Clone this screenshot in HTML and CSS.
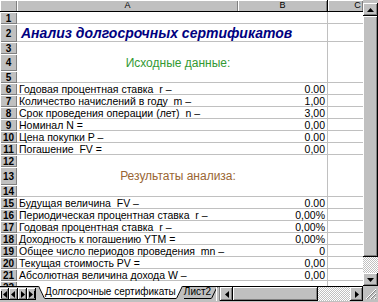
FILE: index.html
```html
<!DOCTYPE html>
<html lang="ru">
<head>
    <meta charset="UTF-8">
    <title>Анализ долгосрочных сертификатов</title>
    <link rel="stylesheet" href="styles.css">
</head>
<body>
<div class="excel">

    <div class="sheet">
        <div class="colheads">
            <div class="corner"></div>
            <div class="colhead col-a">A</div>
            <div class="colhead col-b">B</div>
            <div class="colhead col-c">C</div>
        </div>

        <div class="row line"><div class="rh">1</div><div class="cell"></div><div class="cell-c"></div></div>
        <div class="row line tall"><div class="rh">2</div><div class="cell"><span class="title">Анализ долгосрочных сертификатов</span></div><div class="cell-c"></div></div>
        <div class="row"><div class="rh">3</div><div class="cell"></div><div class="cell-c"></div></div>
        <div class="row mid"><div class="rh">4</div><div class="cell"><span class="section green">Исходные данные:</span></div><div class="cell-c"></div></div>
        <div class="row line"><div class="rh">5</div><div class="cell"></div><div class="cell-c"></div></div>

        <div class="row line"><div class="rh">6</div><div class="cell"><span>Годовая процентная ставка&nbsp; r –</span><span>0.00</span></div><div class="cell-c"></div></div>
        <div class="row line"><div class="rh">7</div><div class="cell"><span>Количество начислений в году&nbsp; m –</span><span>1,00</span></div><div class="cell-c"></div></div>
        <div class="row line"><div class="rh">8</div><div class="cell"><span>Срок проведения операции (лет)&nbsp; n –</span><span>3,00</span></div><div class="cell-c"></div></div>
        <div class="row line"><div class="rh">9</div><div class="cell"><span>Номинал N =</span><span>0,00</span></div><div class="cell-c"></div></div>
        <div class="row line"><div class="rh">10</div><div class="cell"><span>Цена покупки P –</span><span>0.00</span></div><div class="cell-c"></div></div>
        <div class="row line"><div class="rh">11</div><div class="cell"><span>Погашение&nbsp; FV =</span><span>0,00</span></div><div class="cell-c"></div></div>

        <div class="row"><div class="rh">12</div><div class="cell"></div><div class="cell-c"></div></div>
        <div class="row tall"><div class="rh">13</div><div class="cell"><span class="section brown">Результаты анализа:</span></div><div class="cell-c"></div></div>
        <div class="row line"><div class="rh">14</div><div class="cell"></div><div class="cell-c"></div></div>

        <div class="row line"><div class="rh">15</div><div class="cell"><span>Будущая величина&nbsp; FV –</span><span>0.00</span></div><div class="cell-c"></div></div>
        <div class="row line"><div class="rh">16</div><div class="cell"><span>Периодическая процентная ставка&nbsp; r –</span><span>0,00%</span></div><div class="cell-c"></div></div>
        <div class="row line"><div class="rh">17</div><div class="cell"><span>Годовая процентная ставка&nbsp; r –</span><span>0,00%</span></div><div class="cell-c"></div></div>
        <div class="row line"><div class="rh">18</div><div class="cell"><span>Доходность к погашению YTM =</span><span>0,00%</span></div><div class="cell-c"></div></div>
        <div class="row line"><div class="rh">19</div><div class="cell"><span>Общее число периодов проведения&nbsp; mn –</span><span>0</span></div><div class="cell-c"></div></div>
        <div class="row line"><div class="rh">20</div><div class="cell"><span>Текущая стоимость PV =</span><span>0,00</span></div><div class="cell-c"></div></div>
        <div class="row line"><div class="rh">21</div><div class="cell"><span>Абсолютная величина дохода W –</span><span>0,00</span></div><div class="cell-c"></div></div>
        <div class="row line"><div class="rh">22</div><div class="cell"></div><div class="cell-c"></div></div>
    </div>

    <div class="vscroll">
        <div class="btn up">
            <svg width="7" height="4"><polygon points="3.5,0 7,4 0,4" fill="#000"/></svg>
        </div>
        <div class="thumb vthumb"></div>
        <div class="track"></div>
        <div class="btn down">
            <svg width="7" height="4"><polygon points="0,0 7,0 3.5,4" fill="#000"/></svg>
        </div>
    </div>

    <div class="tabbar">
        <div class="nav">
            <div class="navbtn"><svg width="7" height="7"><rect x="0" y="0" width="1" height="7"/><polygon points="6,0 6,7 2,3.5"/></svg></div>
            <div class="navbtn"><svg width="5" height="7"><polygon points="4,0 4,7 0,3.5"/></svg></div>
            <div class="navbtn"><svg width="5" height="7"><polygon points="1,0 1,7 5,3.5"/></svg></div>
            <div class="navbtn"><svg width="7" height="7"><polygon points="1,0 1,7 5,3.5"/><rect x="6" y="0" width="1" height="7"/></svg></div>
        </div>

        <div class="tabs">
            <div class="tab active">
                <svg class="slant" width="7" height="13"><polygon points="0,0 6,12 7,12 7,0" fill="#fff"/><line x1="0.5" y1="0" x2="6.5" y2="12.5" stroke="#000"/></svg>
                <span class="tabtext">Долгосрочные сертификаты</span>
                <svg class="slant" width="7" height="13"><polygon points="0,0 0,12 1,12 7,0" fill="#fff"/><line x1="0.5" y1="12.5" x2="6.5" y2="0" stroke="#000"/></svg>
            </div>
            <div class="tab">
                <span class="tabtext">Лист2</span>
                <svg class="slant" width="7" height="13"><line x1="0.5" y1="12.5" x2="6.5" y2="0" stroke="#000"/></svg>
            </div>
        </div>

        <div class="split"></div>

        <div class="hscroll">
            <div class="btn hbtn"><svg width="4" height="7"><polygon points="4,0 4,7 0,3.5" fill="#000"/></svg></div>
            <div class="thumb hthumb"></div>
            <div class="track"></div>
            <div class="btn hbtn"><svg width="4" height="7"><polygon points="0,0 0,7 4,3.5" fill="#000"/></svg></div>
        </div>
    </div>

    <div class="grip">
        <svg width="12" height="12">
            <line x1="11" y1="1" x2="1" y2="11" stroke="#fff"/>
            <line x1="11" y1="2" x2="2" y2="11" stroke="#808080"/>
            <line x1="11" y1="5" x2="5" y2="11" stroke="#fff"/>
            <line x1="11" y1="6" x2="6" y2="11" stroke="#808080"/>
            <line x1="11" y1="9" x2="9" y2="11" stroke="#fff"/>
            <line x1="11" y1="10" x2="10" y2="11" stroke="#808080"/>
        </svg>
    </div>

</div>
</body>
</html>
```

FILE: styles.css
```css
* {
    box-sizing: border-box;
}

body {
    margin: 0;
    width: 378px;
    height: 302px;
    overflow: hidden;
    background: #c0c0c0;
    font-family: "Liberation Sans", Arial, sans-serif;
}

.excel {
    display: grid;
    grid-template-columns: 363px 15px;
    grid-template-rows: 286px 16px;
    width: 378px;
    height: 302px;
}

/* sheet */
.sheet {
    background: #fff;
    overflow: hidden;
}

.colheads {
    display: flex;
    height: 12px;
    background: #c0c0c0;
    border-bottom: 1px solid #000;
}

.corner {
    width: 17px;
    flex: none;
    box-shadow: inset 1px 1px #fff, inset -1px 0 #808080;
}

.colhead {
    font-size: 9px;
    line-height: 11px;
    text-align: center;
    box-shadow: inset 1px 1px #fff, inset -1px 0 #808080;
}

.col-a { width: 221px; }
.col-b { width: 90px; border-right: 1px solid #000; }
.col-c { flex: 1; padding-left: 24px; }

.row {
    display: flex;
    height: 12px;
}

.row.tall { height: 18px; }
.row.mid { height: 17px; }

.rh {
    width: 17px;
    flex: none;
    background: #c0c0c0;
    box-shadow: inset 1px 1px #fff, inset -1px -1px #808080;
    font-size: 10px;
    font-weight: bold;
    text-align: center;
    display: flex;
    align-items: center;
    justify-content: center;
}

.cell {
    width: 311px;
    flex: none;
    display: flex;
    justify-content: space-between;
    align-items: center;
    padding: 0 2px 0 2px;
    border-right: 1px solid #c0c0c0;
    font-size: 10.5px;
    white-space: nowrap;
}

.cell-c {
    flex: 1;
}

.row.line .cell,
.row.line .cell-c {
    border-bottom: 1px solid #c0c0c0;
}

.title {
    padding-left: 2px;
    font-size: 14px;
    font-weight: bold;
    font-style: italic;
    color: #000080;
}

.section {
    flex: 1;
    text-align: center;
    padding-left: 12px;
    font-size: 12px;
}

.green { color: #339933; }
.brown { color: #996633; }

/* scrollbars */
.btn,
.thumb,
.navbtn {
    background: #c0c0c0;
    box-shadow: inset -1px -1px #000, inset 1px 1px #fff, inset -2px -2px #808080;
}

.btn {
    display: flex;
    align-items: center;
    justify-content: center;
}

.track {
    flex: 1;
    background: repeating-conic-gradient(#fff 0 25%, #c0c0c0 0 50%) 0 0 / 2px 2px;
}

.vscroll {
    display: flex;
    flex-direction: column;
    padding-top: 3px;
    background: #c0c0c0;
}

.vscroll .btn { height: 13px; }
.vthumb { height: 241px; }

/* bottom bar */
.tabbar {
    display: flex;
    align-items: flex-start;
    background: #c0c0c0;
    border-top: 1px solid #000;
}

.nav {
    display: flex;
    width: 38px;
    flex: none;
    padding-top: 1px;
}

.navbtn {
    width: 9px;
    height: 12px;
    display: flex;
    align-items: center;
    justify-content: center;
}

.tabs {
    display: flex;
    width: 178px;
    flex: none;
}

.tab {
    display: flex;
    height: 13px;
    margin-top: -1px;
}

.tabtext {
    height: 13px;
    line-height: 12px;
    font-size: 10px;
    border-bottom: 1px solid #000;
    white-space: nowrap;
}

.tab.active .tabtext {
    background: #fff;
}

.tab + .tab {
    padding-left: 1px;
}

.split {
    width: 4px;
    height: 14px;
    flex: none;
    box-shadow: inset 1px 0 #fff, inset -1px 0 #808080;
}

.hscroll {
    flex: 1;
    display: flex;
    height: 14px;
}

.hbtn { width: 13px; }
.hthumb { width: 85px; }

.grip {
    display: flex;
    align-items: flex-end;
    justify-content: flex-end;
    padding: 0 1px 2px 0;
    background: #c0c0c0;
}
```
